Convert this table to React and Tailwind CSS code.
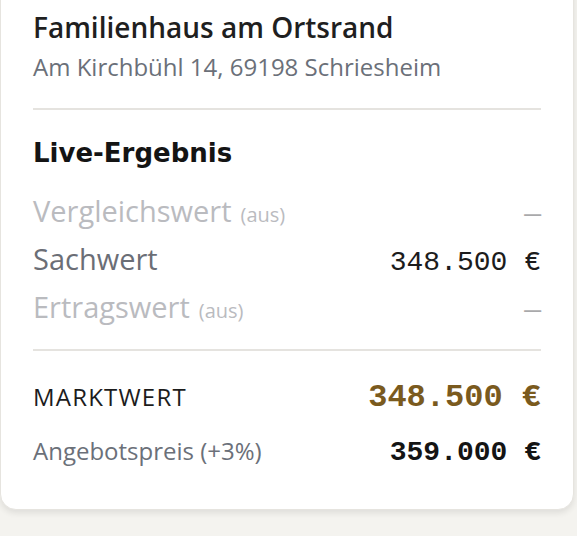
export default function App() {
  const rows = [
    { label: 'Vergleichswert', off: true, value: '—' },
    { label: 'Sachwert', off: false, value: '348.500 €' },
    { label: 'Ertragswert', off: true, value: '—' },
  ];

  return (
    <div className="min-h-screen bg-[#f4f3ef] overflow-hidden font-['Open_Sans',sans-serif]">
      {/* Ergebnis-Karte (oben angeschnitten, wie gescrollt) */}
      <div className="-mt-[24px] w-[574px] bg-white border border-[#e6e4df] rounded-2xl shadow-[0_3px_6px_rgba(0,0,0,0.09)] px-8 pt-8 pb-9">
        <h2 className="text-[28px] leading-[36px] font-semibold text-[#1f1f1f]">Familienhaus am Ortsrand</h2>
        <p className="mt-[6px] text-[24px] leading-[32px] text-[#6b7079]">Am Kirchbühl 14, 69198 Schriesheim</p>

        <div className="mt-[25px] h-[2px] bg-[#e5e3df]"></div>

        <h3 className="mt-[25px] text-[26px] leading-[36px] font-bold text-[#141414] font-['DejaVu_Sans',sans-serif]">Live-Ergebnis</h3>

        <div className="mt-[16px] flex flex-col">
          {rows.map((r) => (
            <div key={r.label} className="flex items-baseline justify-between h-12 leading-[48px]">
              <span className={`text-[29px] ${r.off ? 'text-[#babbbf]' : 'text-[#6b6e76]'}`}>
                {r.label}
                {r.off && <span className="ml-[9px] text-[20px]">(aus)</span>}
              </span>
              <span className={`font-['Liberation_Mono',monospace] text-[28px] ${r.off ? 'text-[#a9a9ab]' : 'text-[#1c1c1c]'}`}>
                {r.value}
              </span>
            </div>
          ))}
        </div>

        <div className="mt-[18px] h-[2px] bg-[#e5e3df]"></div>

        <div className="mt-[26px] flex items-baseline justify-between leading-[40px]">
          <span className="text-[24px] tracking-wider text-[#1c1c1c]">MARKTWERT</span>
          <span className="font-['Liberation_Mono',monospace] text-[32px] font-bold text-[#7a5a1e]">348.500 €</span>
        </div>

        <div className="mt-[13px] flex items-baseline justify-between leading-[40px]">
          <span className="text-[24px] text-[#6b7079]">Angebotspreis (+3%)</span>
          <span className="font-['Liberation_Mono',monospace] text-[28px] font-bold text-[#141414]">359.000 €</span>
        </div>
      </div>
    </div>
  );
}
